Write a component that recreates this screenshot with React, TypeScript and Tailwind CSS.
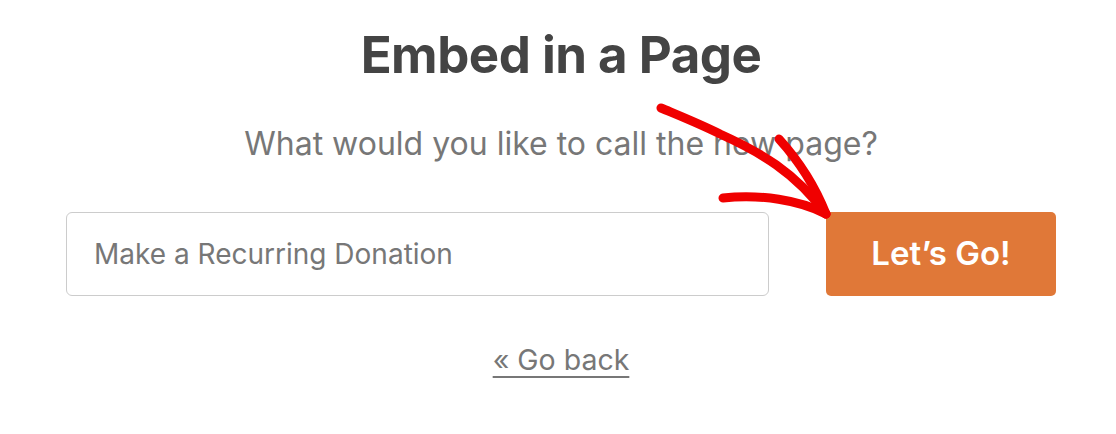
import React from "react";

const RedArrow = () => (
  <svg
    className="absolute left-0 top-0 pointer-events-none"
    width="1116"
    height="434"
    viewBox="0 0 1116 434"
    fill="none"
  >
    <path
      d="M661 108 C 680 116, 700 124, 720 134 C 760 152, 795 172, 826 214"
      stroke="#f00000"
      strokeWidth="9"
      strokeLinecap="round"
      strokeLinejoin="round"
    />
    <path
      d="M779 139 C 798 160, 815 186, 826 214"
      stroke="#f00000"
      strokeWidth="9"
      strokeLinecap="round"
    />
    <path
      d="M723 198 C 760 194, 800 200, 826 214"
      stroke="#f00000"
      strokeWidth="9"
      strokeLinecap="round"
    />
  </svg>
);

export default function App() {
  return (
    <div
      className="relative w-[1116px] h-[434px] bg-white overflow-hidden"
      style={{ fontFamily: "Inter, 'Noto Sans', sans-serif" }}
    >
      <div className="flex flex-col items-center pt-[22px] pl-[6px]">
        <h1 className="text-[51px] leading-[66px] font-bold text-[#444444] tracking-[-0.5px]">
          Embed in a Page
        </h1>
        <p className="mt-[35px] text-[32px] leading-[42px] text-[#777777]">
          What would you like to call the new page?
        </p>
        <div className="mt-[47px] flex items-center gap-[57px]">
          <input
            className="w-[703px] h-[84px] rounded-[6px] border border-[#cccccc] px-[27px] text-[28px] text-[#444] placeholder:text-[#777777] outline-none"
            placeholder="Make a Recurring Donation"
          />
          <button className="w-[230px] h-[84px] rounded-[5px] bg-[#e07838] text-white text-[33px] font-semibold">
            Let’s Go!
          </button>
        </div>
        <a
          href="#"
          className="mt-[46px] text-[28.5px] leading-[36px] text-[#777777] underline underline-offset-[6px]"
        >
          « Go back
        </a>
      </div>
      <RedArrow />
    </div>
  );
}
